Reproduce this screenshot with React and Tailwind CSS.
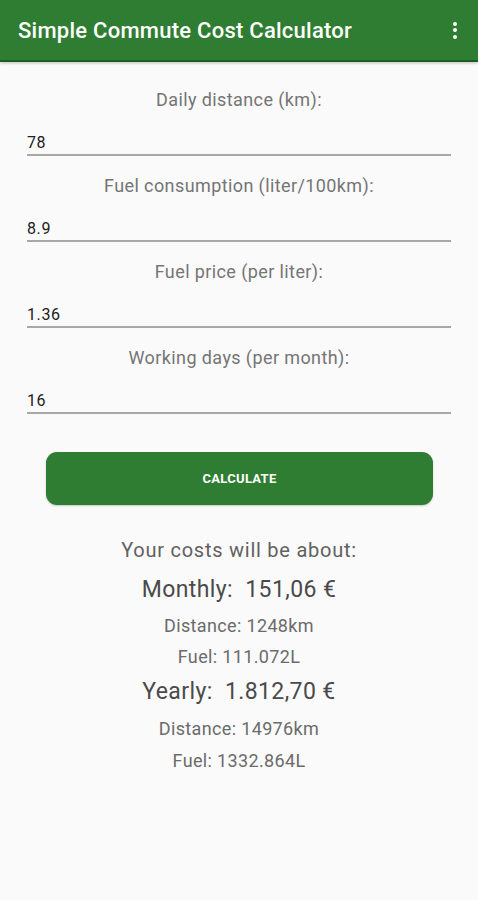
import React from "react";

const font = { fontFamily: "Roboto, 'Noto Sans', sans-serif" };

function Field({ label, value }) {
  return (
    <div className="flex flex-col">
      <div className="h-[30px] flex items-center justify-center text-[18px] tracking-[0.4px] text-[#757575]">{label}</div>
      <div className="mx-[27px] mt-[14px] h-[28px] pt-[3px] flex items-center text-[16px] tracking-[0.6px] text-[#212121] border-b-2 border-[#a8a8a8]">
        {value}
      </div>
    </div>
  );
}

export default function App() {
  return (
    <div className="w-[478px] h-[900px] bg-[#fafafa] flex flex-col" style={font}>
      <div className="h-[62px] bg-[#2e7d32] flex items-center justify-between pl-[18px] pr-[21px] border-b-2 border-[#1b5e20] shadow-[0_1px_3px_rgba(0,0,0,0.25)]">
        <div className="text-white text-[22px] font-medium tracking-[0.25px]">Simple Commute Cost Calculator</div>
        <div className="flex flex-col gap-[2.5px] items-center">
          <span className="w-[4px] h-[4px] rounded-full bg-white"></span>
          <span className="w-[4px] h-[4px] rounded-full bg-white"></span>
          <span className="w-[4px] h-[4px] rounded-full bg-white"></span>
        </div>
      </div>
      <div className="flex flex-col gap-[14px] pt-[22px]">
        <Field label="Daily distance (km):" value="78" />
        <Field label="Fuel consumption (liter/100km):" value="8.9" />
        <Field label="Fuel price (per liter):" value="1.36" />
        <Field label="Working days (per month):" value="16" />
      </div>
      <div className="pl-[46px] pr-[45px] mt-[38px]">
        <div className="h-[53px] rounded-[11px] bg-[#2e7d32] flex items-center justify-center text-white text-[13px] tracking-[0.3px] font-bold shadow-[0_1px_2px_rgba(0,0,0,0.2)]">
          CALCULATE
        </div>
      </div>
      <div className="flex flex-col items-center mt-[30px]">
        <div className="h-[30px] flex items-center text-[20px] tracking-[0.75px] text-[#616161]">Your costs will be about:</div>
        <div className="h-[40px] mt-[5px] flex items-center text-[23px] tracking-[0.4px] text-[#4a4a4a] whitespace-pre">Monthly:  151,06 €</div>
        <div className="h-[30px] flex items-center text-[18px] tracking-[0.35px] text-[#6b6b6b]">Distance: 1248km</div>
        <div className="h-[32px] flex items-center text-[18px] tracking-[0.35px] text-[#6b6b6b]">Fuel: 111.072L</div>
        <div className="h-[40px] flex items-center text-[23px] tracking-[0.4px] text-[#4a4a4a] whitespace-pre">Yearly:  1.812,70 €</div>
        <div className="h-[32px] flex items-center text-[18px] tracking-[0.35px] text-[#6b6b6b]">Distance: 14976km</div>
        <div className="h-[32px] flex items-center text-[18px] tracking-[0.35px] text-[#6b6b6b]">Fuel: 1332.864L</div>
      </div>
    </div>
  );
}
